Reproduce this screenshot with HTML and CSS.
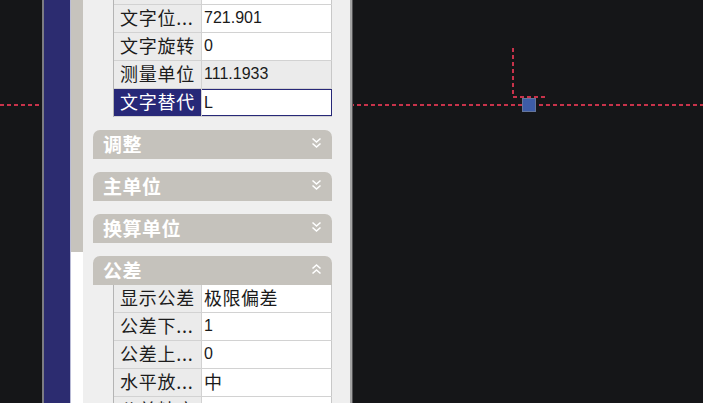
FILE: index.html
```html
<!DOCTYPE html>
<html lang="zh-CN">
<head>
  <meta charset="UTF-8" />
  <title>特性</title>
  <link rel="stylesheet" href="styles.css">
</head>
<body>
  <!-- CAD canvas drawing -->
  <svg class="drawing" width="703" height="403" viewBox="0 0 703 403">
    <g stroke="#c8334b" stroke-width="1.5" stroke-dasharray="4 3" fill="none" shape-rendering="crispEdges">
      <line x1="0" y1="105" x2="703" y2="105" />
      <line x1="513" y1="48" x2="513" y2="97" />
      <line x1="513" y1="97" x2="546" y2="97" />
    </g>
    <rect x="522.5" y="98.5" width="13" height="13" fill="#3d5ca6" stroke="#65759a" />
  </svg>

  <div class="gap-left"></div>

  <div class="palette">
    <div class="titlebar"></div>
    <div class="scrollstrip"></div>
    <div class="content">
      <!-- Text group (scrolled) -->
      <div class="grid top-grid">
        <div class="row"><div class="label"></div><div class="value"></div></div>
        <div class="row"><div class="label">文字位...</div><div class="value">721.901</div></div>
        <div class="row"><div class="label">文字旋转</div><div class="value">0</div></div>
        <div class="row readonly"><div class="label">测量单位</div><div class="value">111.1933</div></div>
        <div class="row selected"><div class="label">文字替代</div><div class="value">L</div></div>
      </div>

      <div class="section">
        <span>调整</span>
        <svg class="chev" width="11" height="12" viewBox="0 0 11 12"><path d="M1.5 1.5 L5.5 5 L9.5 1.5 M1.5 6.5 L5.5 10 L9.5 6.5" /></svg>
      </div>
      <div class="section">
        <span>主单位</span>
        <svg class="chev" width="11" height="12" viewBox="0 0 11 12"><path d="M1.5 1.5 L5.5 5 L9.5 1.5 M1.5 6.5 L5.5 10 L9.5 6.5" /></svg>
      </div>
      <div class="section">
        <span>换算单位</span>
        <svg class="chev" width="11" height="12" viewBox="0 0 11 12"><path d="M1.5 1.5 L5.5 5 L9.5 1.5 M1.5 6.5 L5.5 10 L9.5 6.5" /></svg>
      </div>
      <div class="section">
        <span>公差</span>
        <svg class="chev" width="11" height="12" viewBox="0 0 11 12"><path d="M1.5 5.5 L5.5 2 L9.5 5.5 M1.5 10.5 L5.5 7 L9.5 10.5" /></svg>
      </div>

      <div class="grid">
        <div class="row"><div class="label">显示公差</div><div class="value cjk">极限偏差</div></div>
        <div class="row"><div class="label">公差下...</div><div class="value">1</div></div>
        <div class="row"><div class="label">公差上...</div><div class="value">0</div></div>
        <div class="row"><div class="label">水平放...</div><div class="value cjk">中</div></div>
        <div class="row"><div class="label">公差精度</div><div class="value"></div></div>
      </div>
    </div>
  </div>
</body>
</html>
```

FILE: styles.css
```css
body {
  margin: 0;
  width: 703px;
  height: 403px;
  overflow: hidden;
  background-color: #151618;
  display: flex;
  position: relative;
  font-family: "Liberation Sans", "Noto Sans CJK SC", sans-serif;
}

.drawing {
  position: absolute;
  left: 0;
  top: 0;
}

.gap-left {
  width: 42px;
  flex: none;
}

.palette {
  position: relative;
  z-index: 1;
  width: 306px;
  height: 403px;
  flex: none;
  display: flex;
  border-left: 2px solid #7c7c82;
  border-right: 2px solid #a3a3a3;
  box-shadow: 1px 0 0 #505052;
}

.titlebar {
  width: 26px;
  flex: none;
  background-color: #2c2c70;
  border-right: 1px solid #b9bbd6;
}

.scrollstrip {
  width: 12px;
  flex: none;
  background: linear-gradient(#c6c3bd 0, #c6c3bd 252px, #ffffff 252px);
}

.content {
  flex: 1;
  background-color: #efefef;
  padding: 0 18px 0 10px;
  overflow: hidden;
}

.grid {
  margin-left: 20px;
  border-left: 1px solid #b4b4b4;
}

.top-grid {
  margin-top: -23px;
}

.row {
  display: flex;
  height: 28px;
  box-sizing: border-box;
  border-bottom: 1px solid #d2d2d2;
}

.label {
  width: 88px;
  flex: none;
  background-color: #ebebeb;
  border-right: 1px solid #d2d2d2;
  color: #1c1c1c;
  font-family: "Noto Sans CJK SC", sans-serif;
  font-size: 18px;
  letter-spacing: 0.75px;
  line-height: 25px;
  padding-left: 6px;
  box-sizing: border-box;
  white-space: nowrap;
  overflow: hidden;
}

.value {
  flex: 1;
  background-color: #fff;
  border-right: 1px solid #c8c8c8;
  color: #1a1a1a;
  font-size: 16px;
  line-height: 26px;
  padding-left: 2px;
  white-space: nowrap;
}

.value.cjk {
  font-family: "Noto Sans CJK SC", sans-serif;
  font-size: 18px;
  letter-spacing: 0.5px;
  line-height: 25px;
}

.readonly .value {
  background-color: #ebebeb;
}

.selected .label {
  background-color: #272878;
  color: #fff;
}

.selected .value {
  border: 1px solid #272878;
  border-left: none;
}

.section {
  margin-top: 13px;
  height: 29px;
  background-color: #c5c2bc;
  border-radius: 7px 7px 0 0;
  display: flex;
  justify-content: space-between;
  align-items: center;
  padding: 0 10px 0 10px;
  color: #fff;
  font-family: "Noto Sans CJK SC", sans-serif;
  font-weight: bold;
  font-size: 19px;
  letter-spacing: 0.5px;
}

.section span {
  margin-top: -3px;
}

.chev {
  margin-top: -4px;
}

.chev path {
  fill: none;
  stroke: #fff;
  stroke-width: 1.6;
}
```
